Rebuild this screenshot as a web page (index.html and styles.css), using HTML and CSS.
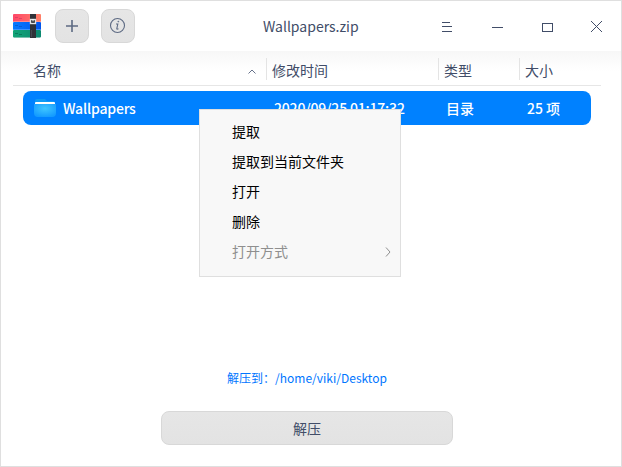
FILE: index.html
```html
<!DOCTYPE html>
<html lang="zh-CN">
<head>
<meta charset="utf-8">
<title>Wallpapers.zip</title>
<link rel="stylesheet" href="styles.css">
</head>
<body>
<div class="window">
  <header class="titlebar">
    <svg class="app-icon" width="30" height="28" viewBox="0 0 30 28">
      <defs>
        <linearGradient id="red"><stop offset="0" stop-color="#ff4768"/><stop offset="1" stop-color="#ff8068"/></linearGradient>
        <linearGradient id="blue"><stop offset="0" stop-color="#087aff"/><stop offset="1" stop-color="#0055ed"/></linearGradient>
        <linearGradient id="green"><stop offset="0" stop-color="#12a577"/><stop offset="1" stop-color="#0b8870"/></linearGradient>
      </defs>
      <rect x="2" y="24" width="26" height="2" fill="#e3e5e8"/>
      <rect x="1" y="2" width="28" height="8" rx="1" fill="url(#red)"/>
      <rect x="1" y="10" width="28" height="8" rx="1" fill="url(#blue)"/>
      <rect x="1" y="18" width="28" height="7.500" rx="1" fill="url(#green)"/>
      <path d="M2 9.500h26" stroke="#ff9a9a" opacity=".7"/>
      <path d="M2 17.500h26" stroke="#3c92ff"/>
      <path d="M3 5.500h3m1 1h3" stroke="#c93a62" opacity=".6"/>
      <path d="M3 13.500h3m1 1h3" stroke="#0755c4" opacity=".7"/>
      <path d="M3 21.500h3m1 1h3" stroke="#087358" opacity=".8"/>
      <rect x="18" y="2" width="6" height="24" fill="#303238"/>
      <path d="M19.500 18v7" stroke="#454850"/>
      <rect x="18.500" y="7.500" width="5" height="4" fill="#202226" stroke="#e2e3e5" stroke-width="1.400"/>
      <path d="M21 7v2.500" stroke="#fff"/>
    </svg>
    <button class="tool tool-add" aria-label="添加">
      <svg width="34" height="34" viewBox="0 0 34 34" fill="none" stroke="#5d6a83" stroke-width="1.600"><path d="M11 17h12M17 11v12"/></svg>
    </button>
    <button class="tool tool-info" aria-label="信息">
      <svg width="34" height="34" viewBox="0 0 34 34" fill="none" stroke="#5d6a83"><circle cx="16.500" cy="16.500" r="7" stroke-width="1.100"/><path d="M15 15h1.800l-1 4.700q-.2 1 1.700.1" stroke-width="1.100"/><circle cx="17.300" cy="12.600" r=".5" fill="#5d6a83" stroke-width=".6"/></svg>
    </button>
    <h1 class="title">Wallpapers.zip</h1>
    <nav class="controls">
      <svg width="50" height="50" viewBox="0 0 50 50"><path d="M21 21.500h8M21 25.500h10M21 30.500h10"/></svg>
      <svg width="50" height="50" viewBox="0 0 50 50"><path d="M21 26.500h11"/></svg>
      <svg width="50" height="50" viewBox="0 0 50 50"><path d="M21.500 22.500h10v8h-10z"/></svg>
      <svg width="50" height="50" viewBox="0 0 50 50"><path d="M20 20l11 11M31 20L20 31"/></svg>
    </nav>
  </header>
  <main class="list">
    <div class="head">
      <div class="columns">
        <span class="col-name">名称
          <svg width="8" height="5" viewBox="0 0 8 5"><path d="M.5 4.500L4 1l3.500 3.500"/></svg>
        </span>
        <span>修改时间</span>
        <span>类型</span>
        <span>大小</span>
      </div>
    </div>
    <div class="row">
      <span class="file">
        <svg width="22" height="20" viewBox="0 0 22 20">
          <defs><radialGradient id="folder" cx=".5" cy=".35" r=".65"><stop offset="0" stop-color="#3fc6ff"/><stop offset="1" stop-color="#159cff"/></radialGradient></defs>
          <path d="M1 7V3q0-2 2-2h8l2 2h6q2 0 2 2v3z" fill="#0e9af4"/>
          <rect x="1" y="4" width="20" height="6" rx="1" fill="#fff"/>
          <path d="M0 6h22v9q0 4-4 4H4q-4 0-4-4z" fill="url(#folder)"/>
        </svg>Wallpapers
      </span>
      <span class="date">2020/09/25 01:17:32</span>
      <span>目录</span>
      <span>25 项</span>
    </div>
  </main>
  <footer class="footer">
    <div class="path">解压到：/home/viki/Desktop</div>
    <button class="extract">解压</button>
  </footer>
  <ul class="menu">
    <li>提取</li>
    <li>提取到当前文件夹</li>
    <li>打开</li>
    <li>删除</li>
    <li class="disabled">打开方式<svg width="6" height="10" viewBox="0 0 6 10"><path d="M1 .5L5 5 1 9.500"/></svg></li>
  </ul>
</div>
</body>
</html>
```
FILE: styles.css
```css
* {
  box-sizing: border-box;
}

body {
  margin: 0;
  font: 14px/20px "Noto Sans CJK SC", sans-serif;
  color: #414d68;
}

svg {
  display: block;
  flex: none;
}

button {
  padding: 0;
  border: 1px solid #d8d8d8;
  border-radius: 8px;
  background: linear-gradient(#e6e6e6, #e3e3e3);
  font: inherit;
  color: inherit;
}

.window {
  position: relative;
  display: flex;
  flex-direction: column;
  width: 622px;
  height: 467px;
  border: 1px solid #dfdfdf;
  background: #fff;
}

.titlebar {
  display: flex;
  height: 50px;
  padding-left: 11px;
}

.app-icon {
  margin-top: 11px;
}

.tool {
  width: 34px;
  height: 34px;
  margin-top: 8px;
}

.tool svg {
  margin: -1px;
}

.tool-add {
  margin-left: 13px;
}

.tool-info {
  margin-left: 12px;
}

.title {
  flex: 1;
  margin: 0 0 0 128px;
  font-size: 14px;
  font-weight: 400;
  line-height: 50px;
  white-space: nowrap;
}

.controls {
  display: flex;
}

.controls svg {
  fill: none;
  stroke: #414d68;
  shape-rendering: crispEdges;
}

.list {
  flex: 1;
}

.head {
  height: 35px;
  padding: 0 20px 0 12px;
  background: linear-gradient(#f7f7f7, #fff 20px);
}

.columns,
.row {
  display: grid;
  grid-template-columns: 253px 172px 81px 1fr;
}

.columns {
  height: 35px;
  padding-top: 7px;
  border-bottom: 1px solid #e6e6e6;
}

.columns span {
  height: 22px;
  padding-left: 5px;
  border-left: 1px solid #e4e4e4;
  line-height: 24px;
}

.columns .col-name {
  display: flex;
  align-items: center;
  justify-content: space-between;
  height: 24px;
  padding: 0 10px 0 20px;
  border: 0;
}

.col-name svg {
  margin-top: 2px;
  fill: none;
  stroke: #66718a;
}

.row {
  grid-template-columns: 251px 172px 81px 1fr;
  height: 34px;
  margin: 5px 30px 0 22px;
  border-radius: 8px;
  background: #0081ff;
  color: #fff;
  font-weight: 500;
  line-height: 34px;
  white-space: nowrap;
}

.file,
.date {
  letter-spacing: -0.18px;
}

.file {
  display: flex;
  gap: 7px;
  padding-left: 11px;
}

.file svg {
  margin-top: 7px;
}

.footer {
  display: flex;
  flex-direction: column;
  align-items: center;
  padding: 0 8px 21px 0;
}

.path {
  margin-bottom: 23px;
  color: #0076ff;
  font-size: 12px;
}

.extract {
  width: 292px;
  height: 34px;
}

.menu {
  position: absolute;
  top: 108px;
  left: 198px;
  width: 202px;
  height: 168px;
  margin: 0;
  padding: 7px 0 0;
  border: 1px solid #dfdfdf;
  background: #f8f8f8;
  color: #000;
  line-height: 28px;
  list-style: none;
}

.menu li {
  display: flex;
  justify-content: space-between;
  height: 30px;
  padding: 0 9px 0 32px;
}

.menu .disabled {
  color: #8f8f8f;
}

.menu svg {
  margin-top: 10px;
  fill: none;
  stroke: #8f8f8f;
}
```
